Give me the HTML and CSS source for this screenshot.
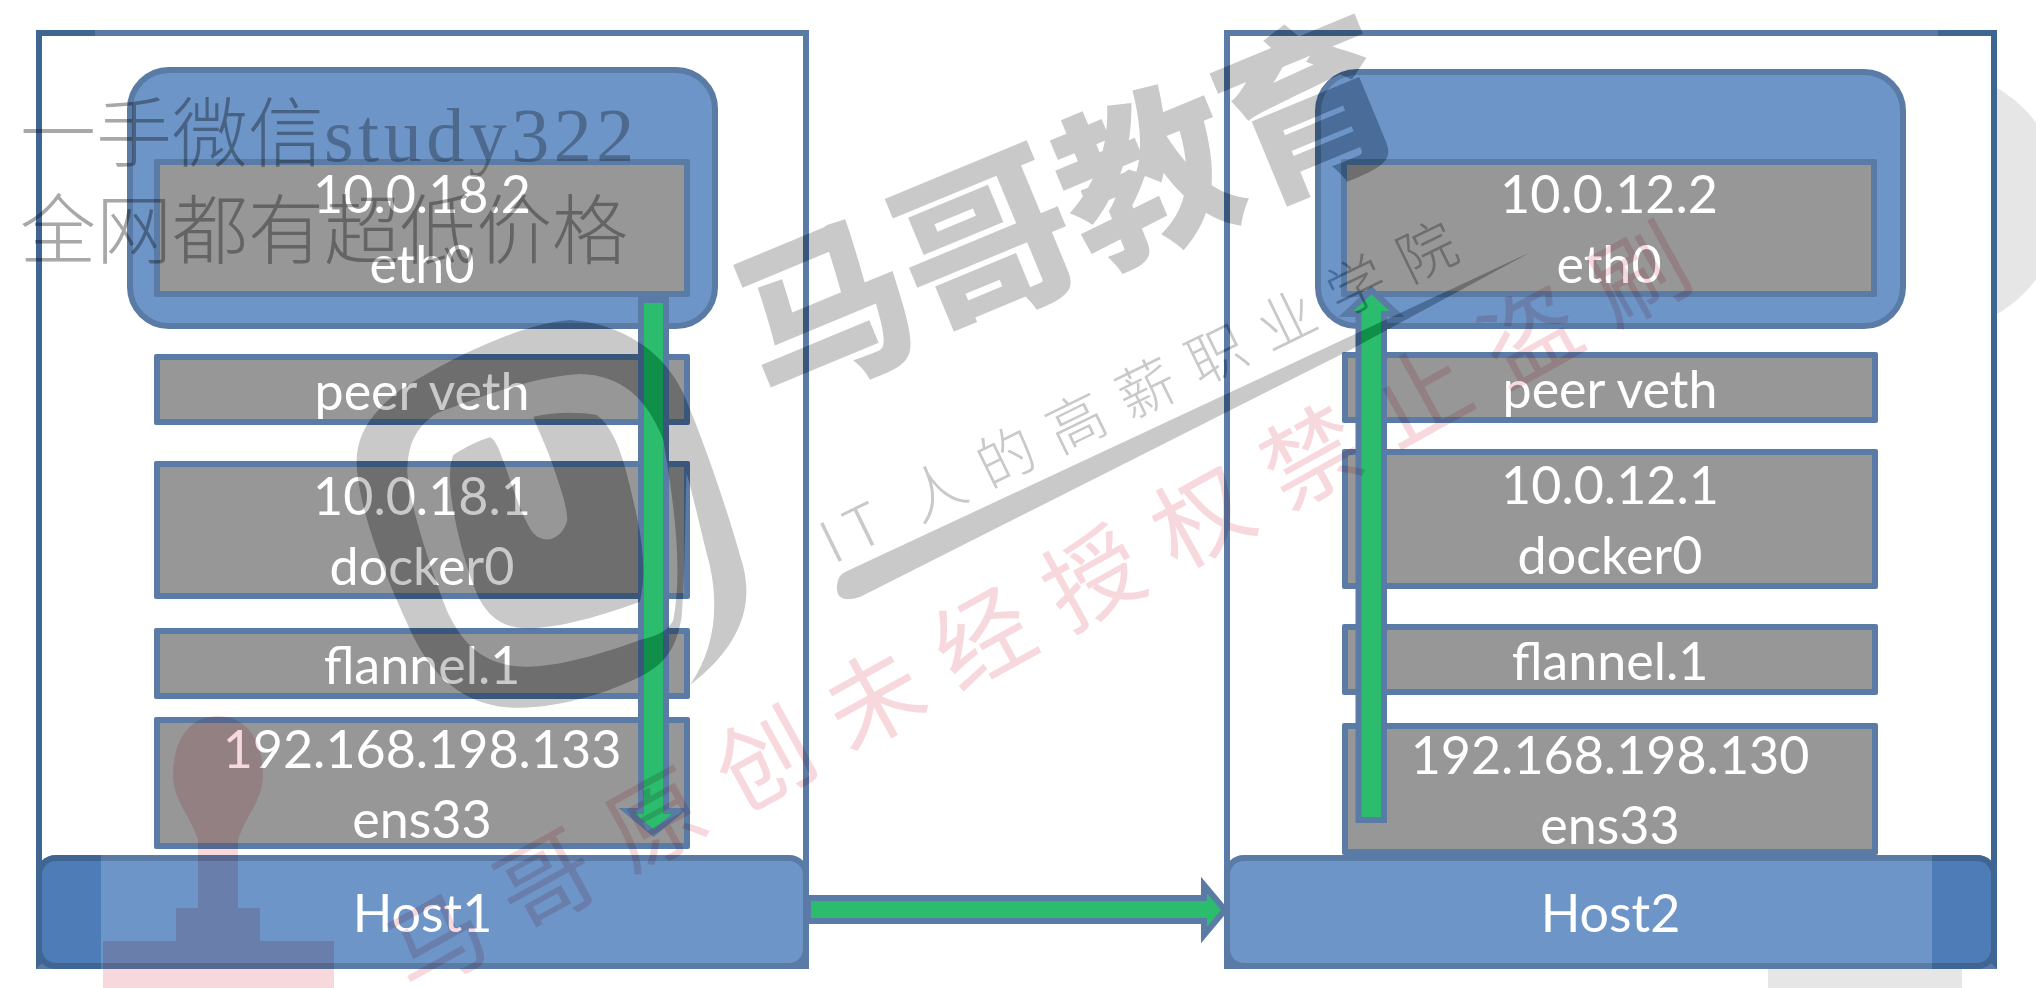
FILE: index.html
```html
<!DOCTYPE html>
<html lang="en">

<head>
  <meta charset="UTF-8" />
  <meta name="viewport" content="width=device-width, initial-scale=1.0" />
  <title>Flannel VXLAN packet path</title>
  <link rel="stylesheet" href="styles.css">
</head>

<body>
  <div class="diagram">
    <!-- pale marks that sit behind the white host panels -->
    <svg class="layer-svg" viewBox="0 0 2036 988">
      <circle class="ghost" cx="1931" cy="201" r="131" />
      <rect class="ghost" x="1768" y="950" width="194" height="38" />
    </svg>

    <div class="host host-a">
      <div class="pod">
        <div class="box eth"><span>10.0.18.2<br>eth0</span></div>
      </div>
      <div class="box peer"><span>peer veth</span></div>
      <div class="box docker"><span>10.0.18.1<br>docker0</span></div>
      <div class="box flannel"><span>flannel.1</span></div>
      <div class="box ens"><span>192.168.198.133<br>ens33</span></div>
      <div class="bar">Host1</div>
    </div>

    <div class="host host-b">
      <div class="pod">
        <div class="box eth"><span>10.0.12.2<br>eth0</span></div>
      </div>
      <div class="box peer"><span>peer veth</span></div>
      <div class="box docker"><span>10.0.12.1<br>docker0</span></div>
      <div class="box flannel"><span>flannel.1</span></div>
      <div class="box ens"><span>192.168.198.130<br>ens33</span></div>
      <div class="bar">Host2</div>
    </div>

    <!-- green arrows -->
    <svg class="layer-svg" viewBox="0 0 2036 988">
      <polygon class="arrow" points="641,300 666,300 666,811 680,811 653.5,833 627,811 641,811" />
      <polygon class="arrow" points="1358.5,820 1384,820 1384,314 1397,314 1371.5,290 1346,314 1358.5,314" />
      <polygon class="arrow" points="808,898 1204,898 1204,885 1225,910 1204,935 1204,921 808,921" />
    </svg>

    <!-- watermark, stamped over everything -->
    <svg class="layer-svg mark mark-gray" viewBox="0 0 2036 988">
      <defs>
        <g id="logo">
          <path fill-rule="evenodd" transform="translate(320,300) scale(0.3333)" d="M750 60 C900 70 1030 150 1090 280 C1150 420 1220 620 1270 800 C1300 920 1260 1040 1110 1155 C1190 1040 1200 900 1160 760 C1140 680 1120 590 1100 520 C1095 650 1095 850 1085 950 C1070 1040 1040 1090 960 1130 C820 1200 660 1230 560 1222 C430 1210 340 1130 280 1010 C220 880 130 680 112 520 C100 420 140 350 240 270 C380 180 600 70 750 60 Z
            M350 340 C480 290 640 230 780 222 C900 225 980 290 1030 420 C1060 600 1090 800 1060 960 C1040 1000 1000 1010 960 1020 C850 1060 720 1100 620 1100 C500 1100 430 1040 380 930 C330 800 270 620 262 520 C262 430 290 380 350 340 Z
            M400 465 C440 440 480 420 510 412 C530 420 545 470 560 510 C580 570 610 660 640 700 C680 740 730 710 742 660 C740 610 720 560 700 500 C680 440 650 380 640 350 C700 335 780 335 830 345 C880 380 910 470 930 560 C960 680 985 800 960 905 C850 945 720 985 620 985 C550 985 500 950 470 880 C430 780 395 640 390 550 C390 510 390 490 400 465 Z" />
          <path d="M845 572 L1531 252 L1350 350 L860 597 Q835 605 837 585 Q838 575 845 572 Z" />
          <text class="brand" transform="translate(1066,208) rotate(-22.5)" text-anchor="middle" dy="0.38em">马哥教育</text>
          <text class="slogan" transform="translate(1147,387) rotate(-26)" text-anchor="middle" dy="0.38em"><tspan class="slogan-it">IT </tspan>人的高薪职业学院</text>
        </g>
      </defs>
      <use href="#logo" />
    </svg>
    <svg class="layer-svg mark mark-burn" viewBox="0 0 2036 988">
      <use href="#logo" />
    </svg>
    <svg class="layer-svg mark mark-pink" viewBox="0 0 2036 988">
      <path d="M218 716 C190 716 173 740 173 775 C173 800 190 815 198 840 L198 908 L176 908 L176 941 L103 941 L103 988 L334 988 L334 941 L260 941 L260 908 L238 908 L238 840 C246 815 263 800 263 775 C263 740 246 716 218 716 Z" />
      <text class="warning" transform="translate(1050,600) rotate(-29)" text-anchor="middle" dy="0.38em">马哥原创未经授权禁止盗刷</text>
    </svg>

    <div class="notice">一手微信<span class="notice-id">study322</span><br>全网都有超低价格</div>
  </div>
</body>

</html>
```

FILE: styles.css
```css
:root {
  --stroke: #5a7ba5;
  --stroke-dark: #3f6593;
  --blue: #6d95c8;
  --blue-dark: #4e7cb7;
  --gray: #979797;
  --green: #2bbd6d;
}

* {
  box-sizing: border-box;
}

body {
  margin: 0;
  background-color: #ffffff;
}

.diagram {
  position: relative;
  display: flex;
  gap: 415px;
  width: 2036px;
  height: 988px;
  padding: 30px 0 0 36px;
  overflow: hidden;
  font-family: "Lato", "Liberation Sans", sans-serif;
  font-size: 52px;
  line-height: 70px;
  color: #ffffff;
}

.layer-svg {
  position: absolute;
  top: 0;
  left: 0;
  width: 2036px;
  height: 988px;
  pointer-events: none;
}

.ghost {
  fill: #e6e6e6;
}

.arrow {
  fill: var(--green);
  stroke: var(--stroke);
  stroke-width: 6;
  stroke-linejoin: miter;
}

/* host panels */
.host {
  position: relative;
  display: flex;
  flex-direction: column;
  width: 773px;
  height: 939px;
  background-color: #ffffff;
  border: 6px solid var(--stroke);
}

.host::before {
  content: "";
  position: absolute;
  top: -6px;
  width: 59px;
  height: 6px;
  background-color: var(--stroke-dark);
}

.host-a {
  border-left-color: var(--stroke-dark);
}

.host-a::before {
  left: -6px;
}

.host-b {
  border-right-color: var(--stroke-dark);
}

.host-b::before {
  right: -6px;
}

.pod {
  flex-shrink: 0;
  width: 591px;
  background-color: var(--blue);
  border: 6px solid var(--stroke);
  border-radius: 42px;
}

.box {
  display: flex;
  align-items: center;
  justify-content: center;
  flex-shrink: 0;
  width: 536px;
  text-align: center;
  white-space: nowrap;
  background-color: var(--gray);
  border: 6px solid var(--stroke);
  border-radius: 2px;
}

.host > .box {
  margin-left: 112px;
}

.eth {
  height: 138px;
}

.peer,
.flannel {
  height: 71px;
}

.ens {
  height: 132px;
}

/* left host: rows */
.host-a .pod {
  height: 262px;
  margin: 31px 0 0 85px;
  padding: 86px 0 0 21px;
}

.host-a .peer {
  margin-top: 25px;
}

.host-a .docker {
  height: 138px;
  margin-top: 36px;
}

.host-a .flannel {
  margin-top: 29px;
}

.host-a .ens {
  margin-top: 18px;
}

/* right host: rows */
.host-b .pod {
  height: 260px;
  margin: 33px 0 0 85px;
  padding: 84px 0 0 20px;
}

.host-b .peer {
  margin-top: 23px;
}

.host-b .docker {
  height: 140px;
  margin-top: 26px;
}

.host-b .flannel {
  margin-top: 35px;
}

.host-b .ens {
  margin-top: 28px;
}

/* bottom bar, sits on the panel border */
.bar {
  position: relative;
  display: flex;
  align-items: center;
  justify-content: center;
  height: 114px;
  margin: auto -6px -6px;
  background-color: var(--blue);
  border: 6px solid var(--stroke);
  border-radius: 20px;
}

.bar::before {
  content: "";
  position: absolute;
  top: -6px;
  bottom: -6px;
  width: 59px;
  background-color: var(--blue-dark);
  border: solid var(--stroke-dark);
}

.host-a .bar::before {
  left: -6px;
  border-width: 6px 0 6px 6px;
  border-radius: 20px 0 0 20px;
}

.host-b .bar::before {
  right: -6px;
  border-width: 6px 6px 6px 0;
  border-radius: 0 20px 20px 0;
}

/* watermarks */
.mark {
  mix-blend-mode: multiply;
}

.mark-gray {
  fill: #cdcdcd;
}

.mark-burn {
  mix-blend-mode: color-burn;
  fill: #ebebeb;
}

.mark-pink {
  fill: #f7d8dc;
}

.brand {
  font-family: "Noto Sans CJK SC", sans-serif;
  font-size: 175px;
  font-weight: 900;
}

.slogan {
  font-family: "Noto Sans CJK SC", sans-serif;
  font-size: 58px;
  font-weight: 300;
  letter-spacing: 20px;
}

.slogan-it {
  letter-spacing: 11px;
}

.warning {
  font-family: "Noto Sans CJK SC", sans-serif;
  font-size: 96px;
  font-weight: 400;
  letter-spacing: 29px;
}

.notice {
  position: absolute;
  top: 87px;
  left: 20px;
  font-family: "Liberation Serif", "Noto Sans CJK SC", serif;
  font-size: 76px;
  font-weight: 300;
  line-height: 97px;
  color: #a8a8a8;
  white-space: nowrap;
  mix-blend-mode: multiply;
}

.notice-id {
  letter-spacing: 4.5px;
  color: #b4b4b4;
}
```
